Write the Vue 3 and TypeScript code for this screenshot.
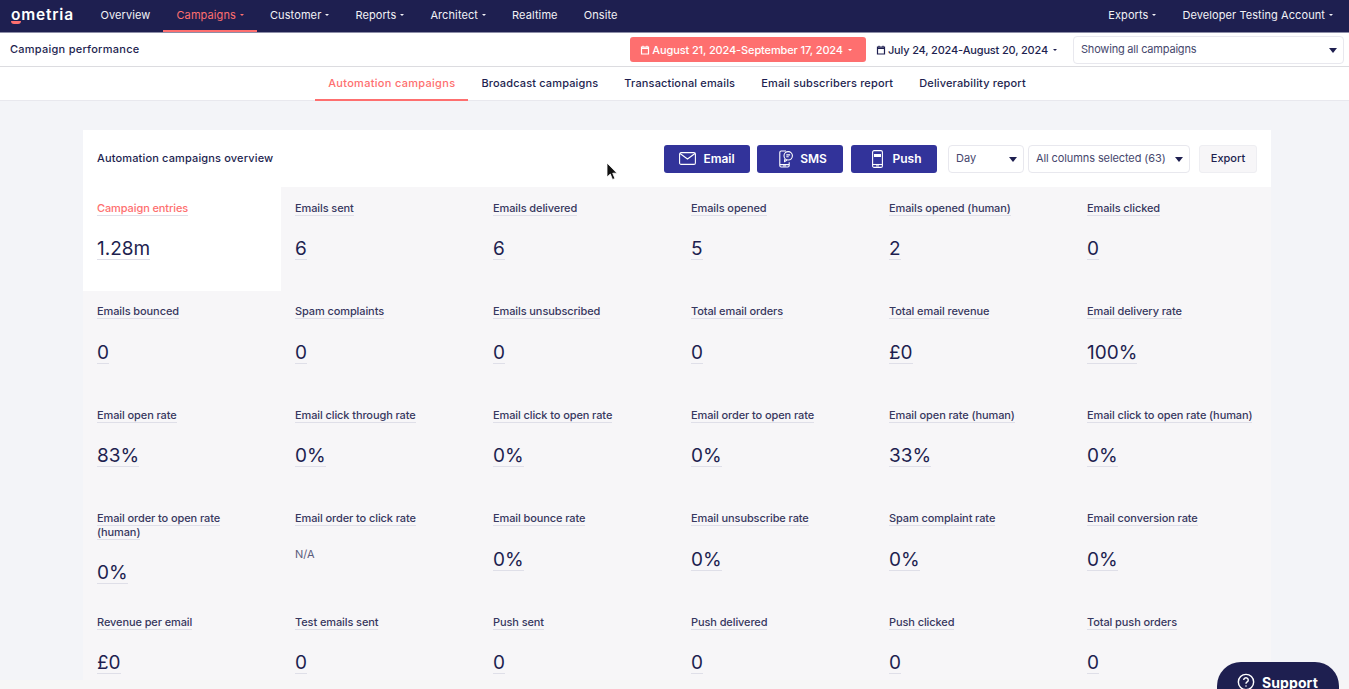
<script setup lang="ts">
interface Metric {
  label: string;
  value: string;
  muted?: boolean;
}

const mainNav = [
  { label: 'Overview', caret: false },
  { label: 'Campaigns', caret: true, active: true },
  { label: 'Customer', caret: true },
  { label: 'Reports', caret: true },
  { label: 'Architect', caret: true },
  { label: 'Realtime', caret: false },
  { label: 'Onsite', caret: false },
];

const tabs = [
  'Automation campaigns',
  'Broadcast campaigns',
  'Transactional emails',
  'Email subscribers report',
  'Deliverability report',
];

const metrics: Metric[] = [
  { label: 'Campaign entries', value: '1.28m' },
  { label: 'Emails sent', value: '6' },
  { label: 'Emails delivered', value: '6' },
  { label: 'Emails opened', value: '5' },
  { label: 'Emails opened (human)', value: '2' },
  { label: 'Emails clicked', value: '0' },
  { label: 'Emails bounced', value: '0' },
  { label: 'Spam complaints', value: '0' },
  { label: 'Emails unsubscribed', value: '0' },
  { label: 'Total email orders', value: '0' },
  { label: 'Total email revenue', value: '£0' },
  { label: 'Email delivery rate', value: '100%' },
  { label: 'Email open rate', value: '83%' },
  { label: 'Email click through rate', value: '0%' },
  { label: 'Email click to open rate', value: '0%' },
  { label: 'Email order to open rate', value: '0%' },
  { label: 'Email open rate (human)', value: '33%' },
  { label: 'Email click to open rate (human)', value: '0%' },
  { label: 'Email order to open rate (human)', value: '0%' },
  { label: 'Email order to click rate', value: 'N/A', muted: true },
  { label: 'Email bounce rate', value: '0%' },
  { label: 'Email unsubscribe rate', value: '0%' },
  { label: 'Spam complaint rate', value: '0%' },
  { label: 'Email conversion rate', value: '0%' },
  { label: 'Revenue per email', value: '£0' },
  { label: 'Test emails sent', value: '0' },
  { label: 'Push sent', value: '0' },
  { label: 'Push delivered', value: '0' },
  { label: 'Push clicked', value: '0' },
  { label: 'Total push orders', value: '0' },
];
</script>

<template>
  <div class="page">
    <header class="topbar">
      <div class="logo">ometria<span class="logo-smile"></span></div>
      <nav class="main-nav">
        <a
          v-for="item in mainNav"
          :key="item.label"
          class="nav-item"
          :class="{ active: item.active }"
        >
          {{ item.label }}<span v-if="item.caret" class="mini-caret"></span>
        </a>
      </nav>
      <div class="nav-right">
        <a class="nav-item">Exports<span class="mini-caret"></span></a>
        <a class="nav-item">Developer Testing Account<span class="mini-caret"></span></a>
      </div>
    </header>

    <div class="subbar">
      <h1 class="page-title">Campaign performance</h1>
      <div class="date-btn primary">
        <svg class="cal" viewBox="0 0 10 10"><path d="M1.5 2h7v7h-7zM3 .8v1.4M7 .8v1.4M1.5 3.4h7" /></svg>
        August 21, 2024-September 17, 2024<span class="mini-caret"></span>
      </div>
      <div class="date-btn">
        <svg class="cal" viewBox="0 0 10 10"><path d="M1.5 2h7v7h-7zM3 .8v1.4M7 .8v1.4M1.5 3.4h7" /></svg>
        July 24, 2024-August 20, 2024<span class="mini-caret"></span>
      </div>
      <div class="select campaigns-select">Showing all campaigns<span class="select-caret"></span></div>
    </div>

    <div class="tabs">
      <a v-for="(tab, i) in tabs" :key="tab" class="tab" :class="{ active: i === 0 }">{{ tab }}</a>
    </div>

    <main class="content">
      <section class="card">
        <div class="card-head">
          <h2 class="card-title">Automation campaigns overview</h2>
          <div class="channel-btns">
            <button class="channel-btn">
              <svg width="17" height="13" viewBox="0 0 17 13"><rect x=".6" y=".6" width="15.8" height="11.8" rx="1.5" /><path d="M1 1.500l7.500 5.500 7.500-5.500" /></svg>
              Email
            </button>
            <button class="channel-btn">
              <svg class="sms-icon" width="14" height="18" viewBox="0 0 14 18">
                <path d="M7 1H2.200A1.400 1.400 0 0 0 .8 2.400v13.200A1.400 1.400 0 0 0 2.200 17h6.600a1.400 1.400 0 0 0 1.400-1.400v-3.400M.8 14.600h9.400" />
                <circle cx="9.200" cy="5.800" r="4.200" />
                <path d="M7.300 4.900h3.800M7.300 6.800h2.400M5.600 9.200v2.400l2.200-1.400" />
                <rect class="fill" x="4" y="15.400" width="3" height="1" />
              </svg>
              SMS
            </button>
            <button class="channel-btn">
              <svg class="push-icon" width="11" height="18" viewBox="0 0 11 18">
                <rect x=".6" y=".6" width="9.800" height="16.800" rx="1.500" />
                <rect class="fill" x="2" y="4" width="7" height="3" />
                <path d="M.6 14.500h9.800" />
                <rect class="fill" x="4" y="15.400" width="3" height="1" />
              </svg>
              Push
            </button>
          </div>
          <div class="select day-select">Day<span class="select-caret"></span></div>
          <div class="select columns-select">All columns selected (63)<span class="select-caret"></span></div>
          <button class="export-btn">Export</button>
        </div>

        <div class="metrics">
          <div
            v-for="(metric, i) in metrics"
            :key="metric.label"
            class="metric"
            :class="{ selected: i === 0 }"
          >
            <div class="metric-label"><span>{{ metric.label }}</span></div>
            <div v-if="metric.muted" class="metric-muted">{{ metric.value }}</div>
            <div v-else class="metric-value"><span>{{ metric.value }}</span></div>
          </div>
        </div>
      </section>
    </main>

    <div class="bottom-band"></div>

    <!-- screen recording pointer -->
    <svg class="pointer" width="12" height="19" viewBox="0 0 12 19">
      <path d="M1 1v14l3.300-3 2.200 5.500 2.400-1-2.200-5.300H11z" />
    </svg>

    <div class="support">
      <svg width="18" height="18" viewBox="0 0 20 20">
        <circle cx="10" cy="10" r="8.500" />
        <path d="M7.500 7.800a2.500 2.500 0 1 1 3.800 2.100c-.9.600-1.300 1-1.300 2" />
        <circle class="dot" cx="10" cy="14.500" r=".9" />
      </svg>
      Support
    </div>
  </div>
</template>

<style scoped>
.page {
  position: relative;
  height: 689px;
  overflow: hidden;
  background: #f3f4f8;
  color: #1e1f50;
  font-family: Inter, 'Liberation Sans', sans-serif;
}

.topbar {
  display: flex;
  align-items: stretch;
  height: 32px;
  padding: 0 3px 0 11px;
  box-sizing: content-box;
  background: #1e1f50;
  border-bottom: 1px solid #8d8ea8;
  font-size: 11px;
}

.logo {
  position: relative;
  width: 63px;
  margin-right: 13.5px;
  color: #fff;
  font-size: 15.5px;
  font-weight: 600;
  line-height: 29px;
  letter-spacing: 0.8px;
}

.logo-smile {
  position: absolute;
  left: 0;
  top: 21px;
  width: 10px;
  height: 3px;
  background: #fe6f6f;
  border-radius: 0 0 5px 5px;
}

.main-nav,
.nav-right {
  display: flex;
  align-items: stretch;
}

.nav-right {
  margin-left: auto;
}

.nav-right .nav-item {
  letter-spacing: 0.08px;
}

.nav-item {
  display: flex;
  align-items: center;
  padding: 0 13px 3px;
  color: #f2f2f6;
  white-space: nowrap;
  letter-spacing: 0.1px;
}

.nav-item.active {
  color: #fe6f6f;
  box-shadow: inset 0 -2px 0 #fe6f6f;
}

.mini-caret {
  display: inline-block;
  margin-left: 4px;
  border-top: 2.5px solid currentColor;
  border-left: 2.5px solid transparent;
  border-right: 2.5px solid transparent;
}

.subbar {
  display: flex;
  align-items: center;
  height: 33px;
  padding: 0 5px 0 10px;
  background: #fff;
  border-bottom: 1px solid #dcdce0;
  font-size: 11px;
}

.page-title {
  margin: 0 auto 2px 0;
  font-size: 11px;
  font-weight: 500;
  letter-spacing: 0.25px;
}

.date-btn {
  display: flex;
  align-items: center;
  height: 25px;
  padding: 0 10px;
  border-radius: 3px;
  white-space: nowrap;
  font-weight: 500;
  letter-spacing: -0.17px;
}

.date-btn.primary {
  padding-right: 14px;
  background: #fe6f6f;
  color: #fff;
  letter-spacing: -0.12px;
}

.date-btn .mini-caret {
  margin-left: 5px;
}

.cal {
  width: 10px;
  height: 10px;
  margin-right: 2px;
  fill: none;
  stroke: currentColor;
  stroke-width: 1.2;
}

.select {
  position: relative;
  display: flex;
  align-items: center;
  height: 28px;
  padding: 0 7px 1px;
  background: #fff;
  border: 1px solid #e8e8ee;
  border-radius: 4px;
  color: #46476d;
  font-size: 11px;
  white-space: nowrap;
  box-sizing: border-box;
}

.select-caret {
  position: absolute;
  right: 6px;
  top: 50%;
  margin-top: -2px;
  border-top: 5px solid #1e1f50;
  border-left: 4.5px solid transparent;
  border-right: 4.5px solid transparent;
}

.campaigns-select {
  width: 271px;
  margin-left: 6px;
  letter-spacing: -0.2px;
}

.tabs {
  display: flex;
  justify-content: center;
  height: 33px;
  padding-left: 5px;
  background: #fff;
  border-bottom: 1px solid #e8e8ee;
  font-size: 11px;
}

.tab {
  display: flex;
  align-items: center;
  padding: 0 13px 1px;
  white-space: nowrap;
  font-weight: 500;
  letter-spacing: 0.15px;
}

.tab.active {
  color: #fe6f6f;
  letter-spacing: 0.3px;
  box-shadow: 0 1px 0 #fe6f6f, inset 0 -1px 0 #fe6f6f;
}

.content {
  padding: 29px 78px 0 83px;
}

.card-head {
  display: flex;
  align-items: center;
  height: 57px;
  padding: 0 14px;
  background: #fff;
}

.card-title {
  margin: 0 auto 2px 0;
  font-size: 11px;
  font-weight: 500;
  letter-spacing: 0.15px;
}

.channel-btns {
  display: flex;
  gap: 7px;
  margin-right: 11px;
}

.channel-btn {
  display: flex;
  align-items: center;
  justify-content: center;
  gap: 7px;
  width: 86px;
  height: 28px;
  padding: 0;
  background: #32339a;
  border: 0;
  border-radius: 3px;
  color: #fff;
  font-family: inherit;
  font-size: 12px;
  font-weight: 600;
}

.channel-btn:last-child {
  margin-left: 1px;
}

.channel-btn svg {
  fill: none;
  stroke: #fff;
  stroke-width: 1.1;
}

.channel-btn svg .fill {
  fill: #fff;
  stroke: none;
}

.sms-icon {
  margin-left: 6px;
}

.push-icon {
  margin-left: 6px;
  margin-right: 2px;
}

.day-select {
  width: 76px;
  margin-right: 4px;
}

.columns-select {
  width: 162px;
  letter-spacing: -0.1px;
}

.export-btn {
  width: 58px;
  height: 28px;
  margin-left: 9px;
  padding: 0 0 1px;
  background: #f7f6f8;
  border: 1px solid #eeeef2;
  border-radius: 3px;
  color: #1e1f50;
  font-family: inherit;
  font-size: 11px;
  font-weight: 500;
}

.metrics {
  display: grid;
  grid-template-columns: repeat(6, 198px);
  grid-auto-rows: 103.5px;
  background: #f7f6f8;
}

.metric {
  padding: 14.7px 16px 0 14px;
  box-sizing: border-box;
}

.metric.selected {
  background: #fff;
}

.metric.selected .metric-label {
  color: #fe6f6f;
}

.metric-label {
  color: #37385f;
  font-size: 11px;
  font-weight: 500;
  line-height: 13.5px;
  letter-spacing: -0.1px;
}

.metric-label span {
  border-bottom: 1px solid #dfdfe8;
}

.metric-value {
  margin-top: 23px;
  font-size: 19px;
  line-height: 21px;
}

.metric-value span {
  display: inline-block;
  border-bottom: 1px solid #dfdfe8;
}

.metric-muted {
  margin-top: 21px;
  color: #5b5c7c;
  font-size: 11px;
  line-height: 14px;
}

.bottom-band {
  position: absolute;
  left: 0;
  right: 0;
  top: 680px;
  height: 9px;
  background: #f6f6f6;
}

.pointer {
  position: absolute;
  left: 606px;
  top: 162px;
}

.pointer path {
  fill: #111;
  stroke: #fff;
  stroke-width: 0.8;
}

.support {
  position: absolute;
  left: 1217px;
  top: 662px;
  display: flex;
  align-items: center;
  gap: 7px;
  width: 122px;
  height: 60px;
  padding: 0 0 20px 20px;
  background: #1e1f50;
  border-radius: 24px;
  box-sizing: border-box;
  color: #fff;
  font-size: 14px;
  font-weight: 700;
  letter-spacing: 0.1px;
}

.support svg {
  fill: none;
  stroke: #fff;
  stroke-width: 1.6;
}

.support svg .dot {
  fill: #fff;
  stroke: none;
}
</style>

<style>
html,
body {
  margin: 0;
  overflow: hidden;
}
</style>
